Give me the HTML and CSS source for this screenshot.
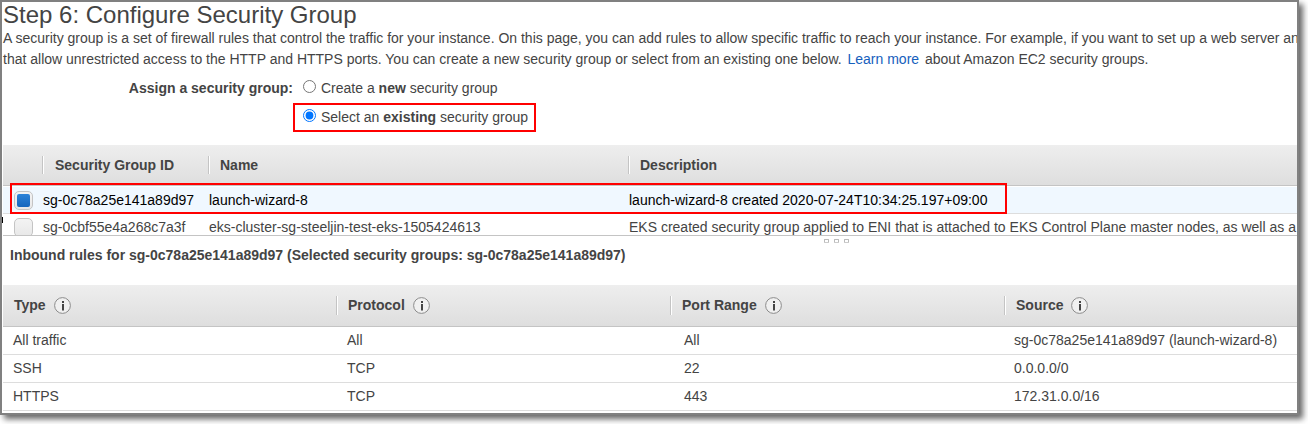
FILE: index.html
```html
<!DOCTYPE html>
<html lang="en">
<head>
<meta charset="utf-8">
<title>Configure Security Group</title>
<link rel="stylesheet" href="styles.css">
</head>
<body>
<svg class="defs" width="0" height="0">
  <symbol id="info" viewBox="0 0 17 17">
    <circle cx="8.5" cy="8.5" r="7.9" fill="#f0f0f0" stroke="#8c8c8c" stroke-width="1"/>
    <path d="M8 4h2v2h-2zM8 7h2v6.5h-2z" fill="#444"/>
  </symbol>
</svg>
<main class="frame">
  <h1 class="title">Step 6: Configure Security Group</h1>
  <p class="intro">A security group is a set of firewall rules that control the traffic for your instance. On this page, you can add rules to allow specific traffic to reach your instance. For example, if you want to set up a web server an<br>that allow unrestricted access to the HTTP and HTTPS ports. You can create a new security group or select from an existing one below. <a class="link">Learn more</a> about Amazon EC2 security groups.</p>
  <section class="assign">
    <div class="assign-label">Assign a security group:</div>
    <div class="options">
      <label class="option"><input class="radio" type="radio" name="sg"><span>Create a <b>new</b> security group</span></label>
      <label class="option option-marked"><input class="radio" type="radio" name="sg" checked><span>Select an <b>existing</b> security group</span></label>
    </div>
  </section>
  <section class="groups">
    <div class="groups-head">
      <div></div><div class="gh">Security Group ID</div><div class="gh">Name</div><div class="gh">Description</div>
    </div>
    <div class="group-row group-selected">
      <div class="check"><i class="check-fill"></i></div><div>sg-0c78a25e141a89d97</div><div>launch-wizard-8</div><div>launch-wizard-8 created 2020-07-24T10:34:25.197+09:00</div>
    </div>
    <div class="group-row group-cut">
      <div class="check"></div><div>sg-0cbf55e4a268c7a3f</div><div>eks-cluster-sg-steeljin-test-eks-1505424613</div><div>EKS created security group applied to ENI that is attached to EKS Control Plane master nodes, as well as a</div>
    </div>
    <div class="row-mark"></div>
    <div class="edge-tick"></div>
  </section>
  <div class="grip"><i class="dot"></i><i class="dot"></i><i class="dot"></i></div>
  <h2 class="inbound">Inbound rules for sg-0c78a25e141a89d97 (Selected security groups: sg-0c78a25e141a89d97)</h2>
  <section class="rules">
    <div class="rules-head">
      <div class="rh">Type<svg class="info"><use href="#info"/></svg></div>
      <div class="rh">Protocol<svg class="info"><use href="#info"/></svg></div>
      <div class="rh">Port Range<svg class="info"><use href="#info"/></svg></div>
      <div class="rh">Source<svg class="info"><use href="#info"/></svg></div>
    </div>
    <div class="rule"><div>All traffic</div><div class="protocol">All</div><div class="port">All</div><div>sg-0c78a25e141a89d97 (launch-wizard-8)</div></div>
    <div class="rule"><div>SSH</div><div class="protocol">TCP</div><div class="port">22</div><div>0.0.0.0/0</div></div>
    <div class="rule"><div>HTTPS</div><div class="protocol">TCP</div><div class="port">443</div><div>172.31.0.0/16</div></div>
  </section>
</main>
</body>
</html>
```
FILE: styles.css
```css
* { box-sizing: border-box; }
html { height: 100%; background: #fff; }
body {
  margin: 0;
  height: 424px;
  overflow: hidden;
  font: 14px/20px "Liberation Sans", Arial, sans-serif;
  color: #444;
}
.defs { display: block; }
.frame {
  width: 1299px;
  height: 415px;
  border: 2px solid #808080;
  background: #fff;
  overflow: hidden;
  white-space: nowrap;
  box-shadow: 4px 4px 6px rgba(0, 0, 0, .6);
}
.title { margin: 0 0 0 1px; font-size: 24px; line-height: 26px; font-weight: normal; }
.intro { margin: 0 0 0 1px; line-height: 21px; }
.link { color: #1660bd; margin: 0 2px 0 2px; }
.assign { display: flex; height: 75px; padding-top: 5px; }
.assign-label { width: 291px; padding-top: 1px; text-align: right; font-weight: bold; line-height: 25px; }
.option { display: flex; align-items: center; height: 25px; padding-left: 10px; }
.radio { width: 13px; height: 13px; margin: 0 5px 3px 0; }
.option-marked {
  width: 243px;
  height: 29px;
  margin-top: 3px;
  padding: 0 0 2px 8px;
  border: 2px solid #f00;
}
.groups { position: relative; margin-left: 1px; }
.groups-head, .group-row { display: grid; grid-template-columns: 39px 166px 420px 1fr; }
.groups-head {
  height: 41px;
  padding-top: 11px;
  border-bottom: 1px solid #c4c4c4;
  background: linear-gradient(#eee, #dedede);
  font-weight: bold;
}
.gh { height: 18px; padding-left: 11px; line-height: 18px; border-left: 1px solid #c4c4c4; box-shadow: inset 1px 0 #fff; }
.gh:nth-child(2) { padding-left: 12px; }
.group-row { line-height: 27px; padding-left: 1px; }
.group-row > div:first-child { margin-left: 10px; }
.group-selected { height: 28px; border-top: 1px solid #fff; border-bottom: 1px solid #ddd; background: #f0f8ff; color: #000; }
.group-cut { height: 22px; border-bottom: 1px solid #c4c4c4; overflow: hidden; }
.check {
  width: 19px;
  height: 19px;
  margin-top: 4px;
  padding: 2px;
  border: 1px solid #c4c4c4;
  border-radius: 5px;
  background: linear-gradient(#f3f3f3, #e8e8e8);
}
.check-fill { display: block; width: 13px; height: 13px; border-radius: 2px; background: linear-gradient(#2d83d8, #1666bd); }
.row-mark { position: absolute; left: 7px; top: 38px; width: 997px; height: 31px; border: 2px solid #f00; }
.edge-tick { position: absolute; left: -1px; top: 72px; width: 1px; height: 6px; background: #000; }
.grip { display: flex; gap: 5px; height: 9px; padding: 3px 0 0 822px; }
.dot { width: 5px; height: 4px; border: 1px solid #bbb; border-bottom-color: #ccc; border-radius: 1px; }
.inbound { margin: 0 0 20px 8px; font-size: 14px; line-height: 20px; }
.rules { margin-left: 1px; }
.rules-head, .rule { display: grid; grid-template-columns: 333px 334px 334px 1fr; }
.rules-head {
  height: 42px;
  padding-top: 11px;
  border-bottom: 1px solid #c4c4c4;
  background: linear-gradient(#eee, #dedede);
  font-weight: bold;
}
.rh { display: flex; height: 19px; padding-left: 11px; line-height: 19px; }
.rh + .rh { border-left: 1px solid #c4c4c4; box-shadow: inset 1px 0 #fff; }
.info { width: 17px; height: 17px; margin: 1px 0 0 8px; }
.rule { height: 28px; line-height: 27px; border-bottom: 1px solid #ddd; }
.rule > div { padding-left: 10px; }
.rule > .protocol { padding-left: 11px; }
.rule > .port { padding-left: 14px; }
```
